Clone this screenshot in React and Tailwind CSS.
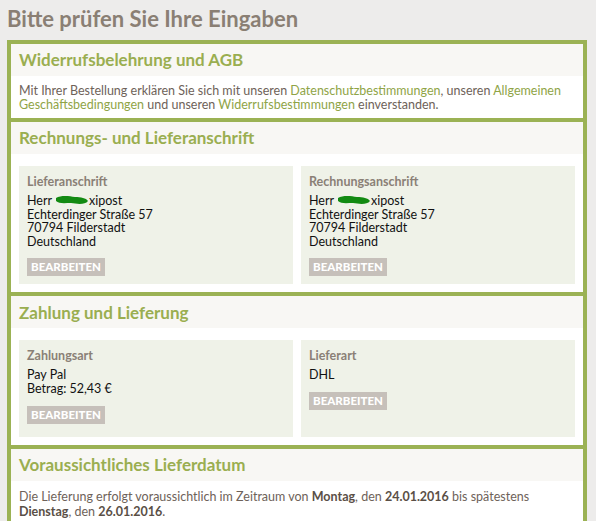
const font = { fontFamily: '"Lato", "Noto Sans", sans-serif' }

const Blob = () => (
  <svg width="34" height="11" viewBox="0 0 34 11" className="inline-block align-[-1px]">
    <path d="M1 3 C6 0, 14 1, 20 2 C26 2, 31 3, 33 6 C30 10, 22 9, 16 8 C10 8, 4 9, 1 6 Z" fill="#128a12" />
  </svg>
)

const Button = () => (
  <button className="bg-[#c6c0ba] text-white text-[11.5px] font-black uppercase px-[4px] h-[18px] leading-[18px]">
    Bearbeiten
  </button>
)

const Card = ({ label, lines, extra }) => (
  <div className={`bg-[#eff2e8] px-2 pt-[8px] ${extra || 'pb-2'}`}>
    <div className="text-[12.5px] font-bold text-[#8a8076] leading-[16px] mb-[4px]">{label}</div>
    <div className="text-[12.5px] leading-[13.6px] text-[#111]">
      {lines.map((l, i) => (
        <div key={i}>{l}</div>
      ))}
    </div>
    <div className="mt-[10px] flex">
      <Button />
    </div>
  </div>
)

const Section = ({ title, children }) => (
  <div className="border-x-4 border-t-4 border-[#9bb254]">
    <div className="bg-[#f8f7f4] h-[32px] flex items-center px-2">
      <h2 className="text-[17px] font-bold text-[#9aae50]">{title}</h2>
    </div>
    <div className="bg-white">{children}</div>
  </div>
)

const Link = ({ children }) => <span className="text-[#8fa446]">{children}</span>

export default function App() {
  const name = (
    <>
      Herr <Blob />xipost
    </>
  )
  const address = [name, 'Echterdinger Straße 57', '70794 Filderstadt', 'Deutschland']
  return (
    <div className="min-h-screen bg-[#edeceb] pl-[7px] pr-[9px] pt-[6px]" style={font}>
      <h1 className="text-[22px] font-bold text-[#8a7f74] leading-[26px] mb-[8px]">Bitte prüfen Sie Ihre Eingaben</h1>
      <Section title="Widerrufsbelehrung und AGB">
        <p className="px-2 pt-[8px] pb-[7px] text-[12.5px] leading-[13.5px] text-[#6e6259]">
          Mit Ihrer Bestellung erklären Sie sich mit unseren <Link>Datenschutzbestimmungen</Link>, unseren{' '}
          <Link>Allgemeinen Geschäftsbedingungen</Link> und unseren <Link>Widerrufsbestimmungen</Link> einverstanden.
        </p>
      </Section>
      <Section title="Rechnungs- und Lieferanschrift">
        <div className="grid grid-cols-2 gap-2 px-2 pt-3 pb-[8px]">
          <Card label="Lieferanschrift" lines={address} />
          <Card label="Rechnungsanschrift" lines={address} />
        </div>
      </Section>
      <Section title="Zahlung und Lieferung">
        <div className="grid grid-cols-2 gap-2 px-2 pt-3 pb-2">
          <Card label="Zahlungsart" lines={['Pay Pal', 'Betrag: 52,43 €']} extra="pb-[13px]" />
          <Card label="Lieferart" lines={['DHL']} />
        </div>
      </Section>
      <Section title="Voraussichtliches Lieferdatum">
        <p className="px-2 pt-[8px] pb-[8px] text-[12.5px] leading-[15px] text-[#6e6259]">
          Die Lieferung erfolgt voraussichtlich im Zeitraum von <b className="text-[#5a4f46]">Montag</b>, den{' '}
          <b className="text-[#5a4f46]">24.01.2016</b> bis spätestens <b className="text-[#5a4f46]">Dienstag</b>, den{' '}
          <b className="text-[#5a4f46]">26.01.2016</b>.
        </p>
      </Section>
    </div>
  )
}
